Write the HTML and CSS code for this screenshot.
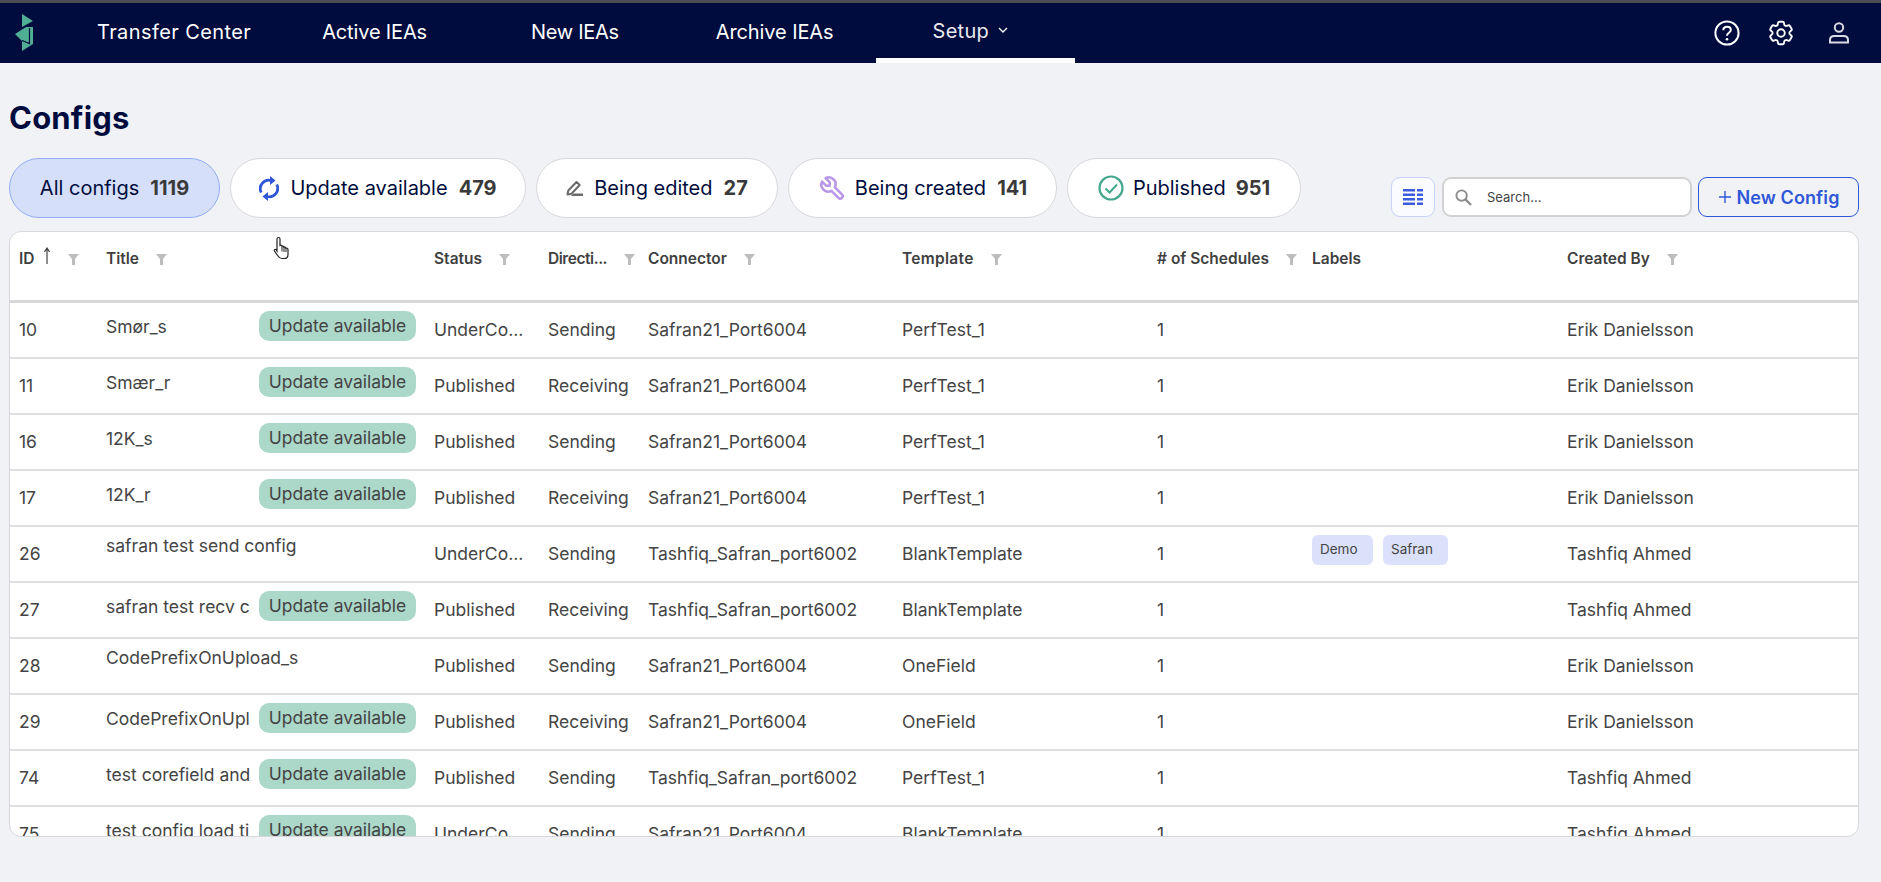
FILE: index.html
```html
<!DOCTYPE html>
<html lang="en">
<head>
<meta charset="utf-8">
<title>Configs</title>
<link rel="stylesheet" href="styles.css">
</head>
<body>
<div class="topline"></div>
<nav class="nav">
  <svg class="logo" viewBox="0 0 19 37" width="19" height="37"><path fill="#4fae94" d="M7 0l11 7-11 6zM0 20l11-7h7v17L7 37V27z"/><path fill="none" stroke="#000c3d" stroke-width="1.200" d="M14.500 14v15.500L7 26.500"/></svg>
  <a class="nav-item nav-transfer">Transfer Center</a>
  <a class="nav-item nav-active">Active IEAs</a>
  <a class="nav-item nav-new">New IEAs</a>
  <a class="nav-item nav-archive">Archive IEAs</a>
  <a class="nav-item nav-setup">Setup <svg class="chev" viewBox="0 0 10 6" width="10" height="6"><path d="M1 1l4 4 4-4" fill="none" stroke="#fff" stroke-width="1.400"/></svg></a>
  <div class="nav-icons">
    <svg class="ic-help" viewBox="0 0 28 28" width="28" height="28"><circle cx="14" cy="14" r="11.600" fill="none" stroke="#fff" stroke-width="2"/><path d="M10.300 11.200c0-2.200 1.700-3.500 3.800-3.500s3.700 1.300 3.700 3.200c0 2.900-3.800 2.700-3.800 5.800" fill="none" stroke="#fff" stroke-width="2"/><circle cx="14" cy="20.300" r="1.300" fill="#fff"/></svg>
    <svg class="ic-gear" viewBox="0 0 24 24" width="30" height="30"><path fill="none" stroke="#fff" stroke-width="1.500" stroke-linejoin="round" d="M9.594 3.940c.09-.542.56-.94 1.110-.94h2.593c.55 0 1.020.398 1.110.94l.213 1.281c.063.374.313.686.645.870.074.040.147.083.220.127.325.196.72.257 1.075.124l1.217-.456a1.125 1.125 0 0 1 1.370.490l1.296 2.247a1.125 1.125 0 0 1-.26 1.431l-1.003.827c-.293.241-.438.613-.43.992a7.723 7.723 0 0 1 0 .255c-.008.378.137.75.43.991l1.004.827c.424.35.534.955.26 1.430l-1.298 2.247a1.125 1.125 0 0 1-1.369.491l-1.217-.456c-.355-.133-.75-.072-1.076.124a6.470 6.470 0 0 1-.22.128c-.331.183-.581.495-.644.869l-.213 1.281c-.09.543-.56.94-1.110.94h-2.594c-.55 0-1.019-.398-1.110-.94l-.213-1.281c-.062-.374-.312-.686-.644-.87a6.520 6.520 0 0 1-.22-.127c-.325-.196-.72-.257-1.076-.124l-1.217.456a1.125 1.125 0 0 1-1.369-.49l-1.297-2.247a1.125 1.125 0 0 1 .26-1.431l1.004-.827c.292-.24.437-.613.43-.991a6.932 6.932 0 0 1 0-.255c.007-.38-.138-.751-.43-.992l-1.004-.827a1.125 1.125 0 0 1-.26-1.430l1.297-2.247a1.125 1.125 0 0 1 1.370-.491l1.216.456c.356.133.751.072 1.076-.124.072-.044.146-.086.220-.128.332-.183.582-.495.644-.869l.214-1.280z"/><circle cx="12" cy="12" r="3" fill="none" stroke="#fff" stroke-width="1.500"/></svg>
    <svg class="ic-user" viewBox="0 0 24 24" width="24" height="24"><circle cx="12" cy="6.500" r="4.200" fill="none" stroke="#d9dae3" stroke-width="2"/><path d="M3 21.500v-2.500c0-2.500 2-4 4.500-4h9c2.500 0 4.500 1.500 4.500 4v2.500z" fill="none" stroke="#d9dae3" stroke-width="2"/></svg>
  </div>
</nav>
<main class="main">
  <h1 class="title">Configs</h1>
  <div class="toolbar">
    <div class="pills">
      <button class="pill pill-on">All configs <b>1119</b></button>
      <button class="pill pill-update"><svg viewBox="0 0 20 27" width="20" height="27"><path fill="none" stroke="#2f57d8" stroke-width="2.800" d="M2.200 17.500A8.500 8.500 0 0 1 12 5.500M17.800 9.500A8.500 8.500 0 0 1 8 21.500"/><path fill="#2f57d8" d="M11 1l5.500 4.500L11 10zM9 26l-5.500-4.500L9 17z"/></svg>Update available <b>479</b></button>
      <button class="pill pill-edit"><svg viewBox="0 0 17 16" width="17" height="16"><path fill="none" stroke="#6a6a6a" stroke-width="2" stroke-linejoin="round" d="M1.500 14.500l.8-4L10.500 2l3.200 3-8.200 8.700z"/><path fill="#6a6a6a" d="M7.500 13.500H17V16H5z"/></svg>Being edited <b>27</b></button>
      <button class="pill pill-create"><svg viewBox="0 0 24 24" width="28" height="28"><path fill="none" stroke="#b996e8" stroke-width="2.200" stroke-linejoin="round" stroke-linecap="round" d="M7 10h3V7L6.500 3.500a6 6 0 0 1 8 8l6 6a2 2 0 0 1-3 3l-6-6a6 6 0 0 1-8-8L7 10"/></svg>Being created <b>141</b></button>
      <button class="pill pill-pub"><svg viewBox="0 0 26 26" width="26" height="26"><circle cx="13" cy="13" r="11.500" fill="none" stroke="#45a78d" stroke-width="2.200"/><path d="M7.500 13.500l4 4 7.500-8" fill="none" stroke="#45a78d" stroke-width="2"/></svg>Published <b>951</b></button>
    </div>
    <div class="tools">
      <button class="col-btn"><svg viewBox="0 0 20 18" width="20" height="18"><path fill="#3a5bdc" d="M0 1h12v2.500H0zM14 1h6v2.500h-6zM0 5.500h12V8H0zM14 5.500h6V8h-6zM0 10h12v2.500H0zM14 10h6v2.500h-6zM0 14.500h12V17H0zM14 14.500h6V17h-6z"/></svg></button>
      <label class="search"><svg viewBox="0 0 18 18" width="17" height="17"><circle cx="7" cy="7" r="5.500" fill="none" stroke="#8c8c8c" stroke-width="2"/><path d="M11 11l6 6" stroke="#8c8c8c" stroke-width="2.400"/></svg><span>Search...</span></label>
      <button class="new-btn"><svg viewBox="0 0 14 14" width="14" height="14"><path d="M7 1v12M1 7h12" stroke="#2f57d8" stroke-width="1.400"/></svg>New Config</button>
    </div>
  </div>
  <div class="table-wrap">
    <table class="table">
      <colgroup><col class="c-id"><col class="c-title"><col class="c-status"><col class="c-dir"><col class="c-conn"><col class="c-tmpl"><col class="c-sched"><col class="c-labels"><col class="c-by"></colgroup>
      <thead>
        <tr>
          <th><span class="th">ID<svg class="arrow" viewBox="0 0 8 17" width="8" height="17"><path d="M4 17V2M1.500 5L4 1l2.500 4" fill="none" stroke="#444" stroke-width="1.200"/></svg><svg class="fn" viewBox="0 0 11 11" width="11" height="11"><path fill="#bdbdbd" d="M0 0h11L7 5v6H4V5z"/></svg></span></th>
          <th><span class="th">Title<svg class="fn" viewBox="0 0 11 11" width="11" height="11"><path fill="#bdbdbd" d="M0 0h11L7 5v6H4V5z"/></svg></span></th>
          <th><span class="th">Status<svg class="fn" viewBox="0 0 11 11" width="11" height="11"><path fill="#bdbdbd" d="M0 0h11L7 5v6H4V5z"/></svg></span></th>
          <th><span class="th th-dir">Directi...<svg class="fn" viewBox="0 0 11 11" width="11" height="11"><path fill="#bdbdbd" d="M0 0h11L7 5v6H4V5z"/></svg></span></th>
          <th><span class="th">Connector<svg class="fn" viewBox="0 0 11 11" width="11" height="11"><path fill="#bdbdbd" d="M0 0h11L7 5v6H4V5z"/></svg></span></th>
          <th><span class="th th-tmpl">Template<svg class="fn" viewBox="0 0 11 11" width="11" height="11"><path fill="#bdbdbd" d="M0 0h11L7 5v6H4V5z"/></svg></span></th>
          <th><span class="th"># of Schedules<svg class="fn" viewBox="0 0 11 11" width="11" height="11"><path fill="#bdbdbd" d="M0 0h11L7 5v6H4V5z"/></svg></span></th>
          <th><span class="th">Labels</span></th>
          <th><span class="th">Created By<svg class="fn" viewBox="0 0 11 11" width="11" height="11"><path fill="#bdbdbd" d="M0 0h11L7 5v6H4V5z"/></svg></span></th>
        </tr>
      </thead>
      <tbody>
        <tr><td>10</td><td class="t"><div class="tc"><span class="tn">Smør_s</span><span class="badge">Update available</span></div></td><td>UnderCo...</td><td>Sending</td><td>Safran21_Port6004</td><td>PerfTest_1</td><td>1</td><td></td><td>Erik Danielsson</td></tr>
        <tr><td>11</td><td class="t"><div class="tc"><span class="tn">Smær_r</span><span class="badge">Update available</span></div></td><td>Published</td><td>Receiving</td><td>Safran21_Port6004</td><td>PerfTest_1</td><td>1</td><td></td><td>Erik Danielsson</td></tr>
        <tr><td>16</td><td class="t"><div class="tc"><span class="tn">12K_s</span><span class="badge">Update available</span></div></td><td>Published</td><td>Sending</td><td>Safran21_Port6004</td><td>PerfTest_1</td><td>1</td><td></td><td>Erik Danielsson</td></tr>
        <tr><td>17</td><td class="t"><div class="tc"><span class="tn">12K_r</span><span class="badge">Update available</span></div></td><td>Published</td><td>Receiving</td><td>Safran21_Port6004</td><td>PerfTest_1</td><td>1</td><td></td><td>Erik Danielsson</td></tr>
        <tr><td>26</td><td class="t"><div class="tc tc-plain"><span class="tn-full">safran test send config</span></div></td><td>UnderCo...</td><td>Sending</td><td>Tashfiq_Safran_port6002</td><td>BlankTemplate</td><td>1</td><td class="t"><div class="tags"><span class="tag">Demo</span><span class="tag">Safran</span></div></td><td>Tashfiq Ahmed</td></tr>
        <tr><td>27</td><td class="t"><div class="tc"><span class="tn">safran test recv c</span><span class="badge">Update available</span></div></td><td>Published</td><td>Receiving</td><td>Tashfiq_Safran_port6002</td><td>BlankTemplate</td><td>1</td><td></td><td>Tashfiq Ahmed</td></tr>
        <tr><td>28</td><td class="t"><div class="tc tc-plain"><span class="tn-full">CodePrefixOnUpload_s</span></div></td><td>Published</td><td>Sending</td><td>Safran21_Port6004</td><td>OneField</td><td>1</td><td></td><td>Erik Danielsson</td></tr>
        <tr><td>29</td><td class="t"><div class="tc"><span class="tn">CodePrefixOnUpl</span><span class="badge">Update available</span></div></td><td>Published</td><td>Receiving</td><td>Safran21_Port6004</td><td>OneField</td><td>1</td><td></td><td>Erik Danielsson</td></tr>
        <tr><td>74</td><td class="t"><div class="tc"><span class="tn">test corefield and</span><span class="badge">Update available</span></div></td><td>Published</td><td>Sending</td><td>Tashfiq_Safran_port6002</td><td>PerfTest_1</td><td>1</td><td></td><td>Tashfiq Ahmed</td></tr>
        <tr><td>75</td><td class="t"><div class="tc"><span class="tn">test config load ti</span><span class="badge">Update available</span></div></td><td>UnderCo...</td><td>Sending</td><td>Safran21_Port6004</td><td>BlankTemplate</td><td>1</td><td></td><td>Tashfiq Ahmed</td></tr>
      </tbody>
    </table>
  </div>
</main>
<svg class="cursor" viewBox="0 0 18 24" width="18" height="24"><path fill="#fff" stroke="#222" stroke-width="1.200" d="M5.500 1.500c1 0 1.500.6 1.500 1.500v6.500c.9-.6 2-.2 2 .7.900-.4 1.700 0 1.800.9.900-.4 1.700 0 1.900 1 .9-.3 2.300.2 2.300 1.300v5c0 2.500-1.500 4.100-4 4.100H9c-2 0-3-1-4-2.500L1.500 15c-.6-1 .4-2.200 1.500-1.500L4 15V3c0-1 .5-1.500 1.500-1.500z"/><path d="M9 10.500v5M11 11v5M13 12v4" stroke="#222" stroke-width="1"/></svg>
</body>
</html>
```
FILE: styles.css
```css
* { box-sizing: border-box; }
html, body { margin: 0; padding: 0; height: 100%; overflow: hidden; }
body { background: #f1f2f6; font-family: "Inter", "Liberation Sans", sans-serif; color: #444; position: relative; }
.topline { height: 3px; background: #4c4c52; }
.nav { height: 60px; background: #000c3d; display: flex; align-items: center; padding-left: 15px; color: #fff; }
.logo { flex: none; margin-top: -1px; }
.nav-item { font-size: 20px; font-weight: 400; color: #fff; display: flex; align-items: center; height: 60px; letter-spacing: 0.3px; padding-bottom: 3px; }
.nav-transfer { margin-left: 63px; letter-spacing: 0.4px; }
.nav-active { margin-left: 71px; letter-spacing: -0.15px; }
.nav-new { margin-left: 104px; letter-spacing: -0.3px; }
.nav-archive { margin-left: 97px; letter-spacing: -0.1px; }
.nav-setup { margin-left: 42px; padding: 0 0 0 57px; width: 199px; border-bottom: 5px solid #fff; gap: 9px; color: #e8e9f0; }
.chev { margin-top: -2px; }
.nav-icons { margin-left: auto; display: flex; align-items: center; padding-right: 30px; }
.ic-gear { margin-left: 25px; }
.ic-user { margin-left: 31px; }
.main { padding: 0 22px 0 9px; }
.title { margin: 0; font-size: 31px; font-weight: 700; color: #000c3d; line-height: 40px; padding-top: 35px; letter-spacing: 0.2px; }
.toolbar { display: flex; justify-content: space-between; align-items: flex-end; margin-top: 20px; height: 60px; }
.pills { display: flex; gap: 10px; }
.pill { height: 60px; border-radius: 30px; border: 1px solid #d8d8dc; background: #fff; font: 400 20px "Inter", sans-serif; color: #000c3d; display: flex; align-items: center; padding: 0; white-space: nowrap; justify-content: center; flex: none; gap: 0; }
.pill b { font-weight: 700; color: #3a3a3a; margin-left: 11px; }
.pill svg { margin-right: 11px; flex: none; }
.pill-on { width: 211px; background: #d6dffa; border-color: #92abf5; }
.pill-update { width: 296px; }
.pill-edit { width: 242px; }
.pill-create { width: 269px; }
.pill-pub { width: 234px; }
.pill-create svg { margin-right: 9px; }
.pill-pub svg { margin-right: 9px; }
.pill-pub b { margin-left: 10px; }
.tools { display: flex; align-items: flex-start; height: 40px; margin-bottom: 1px; }
.col-btn { width: 44px; height: 40px; border: 1px solid #c6d2fa; border-radius: 9px; background: #fafbff; display: flex; align-items: center; justify-content: center; padding: 0; margin-right: 7px; }
.search { width: 250px; height: 40px; border: 2px solid #d2d2d2; border-radius: 9px; background: #fff; display: flex; align-items: center; padding-left: 11px; margin-right: 6px; font: 400 13px "Inter", sans-serif; color: #444; gap: 15px; }
.new-btn { width: 161px; height: 40px; border: 1px solid #2f57d8; border-radius: 9px; background: transparent; color: #2f57d8; font: 600 18px "Inter", sans-serif; display: flex; align-items: center; justify-content: center; gap: 5px; padding: 0; letter-spacing: 0.1px; }
.table-wrap { margin-top: 13px; width: 1850px; height: 606px; background: #fff; border: 1px solid #d8d8dc; border-radius: 12px; overflow: hidden; }
.table { border-collapse: separate; border-spacing: 0; table-layout: fixed; width: 1848px; }
.c-id { width: 87px; } .c-title { width: 328px; } .c-status { width: 114px; } .c-dir { width: 100px; }
.c-conn { width: 254px; } .c-tmpl { width: 255px; } .c-sched { width: 155px; } .c-labels { width: 255px; } .c-by { width: 300px; }
th { height: 71px; border-bottom: 3px solid #d8d8d8; padding: 0 0 4px 9px; text-align: left; font-size: 15.500px; font-weight: 600; color: #3f3f3f; vertical-align: top; }
.th { display: flex; align-items: center; height: 52px; white-space: nowrap; }
.th-dir { letter-spacing: -0.45px; }
.th-tmpl { letter-spacing: 0.3px; }
.fn { margin-left: 17px; margin-top: 3px; flex: none; }
.arrow { margin-left: 8px; margin-top: -6px; flex: none; }
td { height: 56px; padding: 0 0 2px 9px; border-bottom: 2px solid #dfdfdf; font-size: 17.500px; color: #444; white-space: nowrap; overflow: hidden; vertical-align: middle; }
td.t { vertical-align: top; padding-top: 8px; padding-bottom: 0; }
.tc { display: flex; align-items: center; min-height: 30px; gap: 8px; }
.tc-plain { align-items: flex-start; }
.tn { width: 145px; overflow: hidden; flex: none; }
.tn-full { line-height: 22px; }
.badge { flex: none; width: 157px; height: 30px; padding-bottom: 1px; background: #abd8c9; border-radius: 10px; display: flex; align-items: center; justify-content: center; color: #444; }
.tags { display: flex; gap: 10px; }
.tag { height: 30px; padding: 0 8px; background: #dce1fb; border-radius: 6px; font-size: 13.500px; display: flex; align-items: center; padding-bottom: 2px; }
.tag:nth-child(1) { width: 61px; } .tag:nth-child(2) { width: 65px; }
.cursor { position: absolute; left: 273px; top: 236px; }
```
